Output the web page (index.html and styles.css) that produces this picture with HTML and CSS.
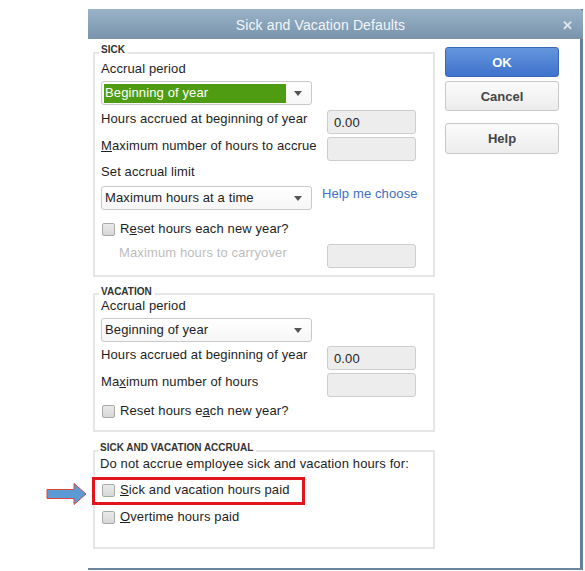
FILE: index.html
```html
<!DOCTYPE html>
<html lang="en">
<head>
    <meta charset="UTF-8" />
    <meta name="viewport" content="width=device-width, initial-scale=1.0"/>
    <title>Sick and Vacation Defaults</title>
    <link rel="stylesheet" href="styles.css">
</head>
<body>
    <div class="screen">
        <div class="dialog">
            <div class="titlebar">
                <span class="title">Sick and Vacation Defaults</span>
                <span class="close">&#x2715;</span>
            </div>

            <div class="dialog-body">
                <div class="groups">
                    <section class="group group-sick">
                        <div class="group-title">SICK</div>
                        <div class="label first">Accrual period</div>
                        <div class="select select-active">
                            <span class="select-value">Beginning of year</span>
                            <span class="caret"></span>
                        </div>
                        <div class="row row-first">
                            <div class="row-label">Hours accrued at beginning of year</div>
                            <div class="field">0.00</div>
                        </div>
                        <div class="row">
                            <div class="row-label"><u>M</u>aximum number of hours to accrue</div>
                            <div class="field"></div>
                        </div>
                        <div class="label limit">Set accrual limit</div>
                        <div class="select-row">
                            <div class="select">
                                <span class="select-value">Maximum hours at a time</span>
                                <span class="caret"></span>
                            </div>
                            <a href="#" class="help-link">Help me choose</a>
                        </div>
                        <label class="check check-reset">
                            <span class="box"></span>R<u>e</u>set hours each new year?
                        </label>
                        <div class="row row-carry">
                            <div class="row-label disabled">Maximum hours to carryover</div>
                            <div class="field"></div>
                        </div>
                    </section>

                    <section class="group group-vacation">
                        <div class="group-title">VACATION</div>
                        <div class="label">Accrual period</div>
                        <div class="select">
                            <span class="select-value">Beginning of year</span>
                            <span class="caret"></span>
                        </div>
                        <div class="row row-first">
                            <div class="row-label">Hours accrued at beginning of year</div>
                            <div class="field">0.00</div>
                        </div>
                        <div class="row">
                            <div class="row-label">Ma<u>x</u>imum number of hours</div>
                            <div class="field"></div>
                        </div>
                        <label class="check check-vac">
                            <span class="box"></span>Reset hours e<u>a</u>ch new year?
                        </label>
                    </section>

                    <section class="group group-accrual">
                        <div class="group-title">SICK AND VACATION ACCRUAL</div>
                        <div class="label intro">Do not accrue employee sick and vacation hours for:</div>
                        <label class="check check-paid">
                            <span class="box"></span><u>S</u>ick and vacation hours paid
                        </label>
                        <label class="check check-overtime">
                            <span class="box"></span><u>O</u>vertime hours paid
                        </label>
                        <div class="highlight"></div>
                    </section>
                </div>

                <div class="buttons">
                    <button class="btn btn-ok">OK</button>
                    <button class="btn btn-cancel">Cancel</button>
                    <button class="btn btn-help">Help</button>
                </div>
            </div>
        </div>

        <svg class="pointer" width="42" height="24" viewBox="0 0 42 24">
            <path d="M1 7.5 H28 V1.5 L40 12 L28 22.5 V16.5 H1 Z" fill="#5b9bd5" stroke="#e0443e" stroke-width="1"/>
        </svg>
    </div>
</body>
</html>
```

FILE: styles.css
```css
* {
    margin: 0;
    padding: 0;
    box-sizing: border-box;
}

body {
    font-family: 'Liberation Sans', Arial, sans-serif;
    font-size: 13px;
    letter-spacing: 0.12px;
    color: #1e1e1e;
    background: #ffffff;
}

.screen {
    position: relative;
    width: 585px;
    height: 571px;
    overflow: hidden;
}

.dialog {
    margin: 9px 0 0 88px;
    width: 495px;
    height: 561px;
    background: #ffffff;
    border-right: 3px solid #647f98;
    border-bottom: 2px solid #6b86a0;
}

.titlebar {
    display: flex;
    align-items: center;
    height: 30px;
    margin-right: -3px;
    background: linear-gradient(to bottom, #9ab3c8, #7893ab);
    border-top-right-radius: 4px;
}

.title {
    flex: 1;
    padding-top: 2px;
    text-align: center;
    font-size: 14px;
    color: #f3f6f9;
}

.close {
    width: 30px;
    padding-top: 2px;
    text-align: center;
    font-size: 13px;
    font-weight: bold;
    color: #dfe5ea;
}

.dialog-body {
    display: flex;
    gap: 10px;
    padding: 13px 0 0 5px;
}

.groups {
    width: 342px;
}

.group {
    position: relative;
    border: 2px solid #e6e6e6;
    padding: 0 6px;
}

.group-title {
    width: fit-content;
    height: 12px;
    margin: -10px 0 0 -2px;
    padding: 0 3px 0 2px;
    background: #ffffff;
    font-size: 10px;
    font-weight: bold;
    line-height: 12px;
    letter-spacing: 0;
    color: #333333;
}

.label {
    line-height: 16px;
}

.group-sick .label.first {
    margin-top: 5px;
}

.select {
    display: flex;
    align-items: center;
    width: 211px;
    height: 24px;
    margin-top: 4px;
    padding: 2px;
    border: 1px solid #c9c9c9;
    border-radius: 3px;
    background: linear-gradient(to bottom, #ffffff, #f6f6f6);
}

.select-value {
    flex: 1;
    padding-left: 1px;
    line-height: 18px;
}

.select-active .select-value {
    height: 19px;
    background: #4f9c12;
    color: #ffffff;
}

.caret {
    width: 0;
    height: 0;
    margin: 0 7px 0 8px;
    border-left: 4px solid transparent;
    border-right: 4px solid transparent;
    border-top: 5px solid #555555;
}

.row {
    display: flex;
    align-items: flex-start;
    margin-top: 3px;
}

.row-first {
    margin-top: 5px;
}

.row-label {
    width: 226px;
    padding-top: 1px;
    line-height: 16px;
}

.row-label.disabled {
    padding-left: 18px;
    color: #bdbdbd;
}

.field {
    width: 89px;
    height: 24px;
    padding: 4px 6px;
    border: 1px solid #cdcdcd;
    border-radius: 3px;
    background: #ededed;
    line-height: 15px;
}

.group-sick .label.limit {
    margin-top: 3px;
}

.select-row {
    display: flex;
    align-items: flex-start;
    gap: 10px;
    margin-top: 6px;
}

.select-row .select {
    margin-top: 0;
}

.help-link {
    line-height: 16px;
    color: #3d6fc6;
    text-decoration: none;
}

.check {
    display: flex;
    align-items: center;
    line-height: 16px;
}

.box {
    width: 13px;
    height: 13px;
    margin: 0 5px 0 1px;
    border: 1px solid #a9a9a9;
    border-radius: 2px;
    background: linear-gradient(to bottom, #e9e9e9, #d7d7d7);
}

.check-reset {
    margin-top: 11px;
}

.row-carry {
    margin-top: 7px;
    margin-bottom: 7px;
}

.group-vacation {
    margin-top: 16px;
    padding-bottom: 11px;
}

.group-vacation .group-title {
    margin-top: -9px;
}

.group-vacation .label {
    margin-top: 0;
}

.group-vacation .row-first {
    margin-top: 4px;
}

.check-vac {
    margin-top: 6px;
}

.group-accrual {
    margin-top: 18px;
    padding-left: 5px;
    padding-bottom: 22px;
}

.label.intro {
    margin-top: 2px;
}

.check-paid {
    margin-top: 10px;
    padding-left: 1px;
}

.check-overtime {
    margin-top: 11px;
    padding-left: 1px;
}

.highlight {
    position: absolute;
    left: -3px;
    top: 25px;
    width: 213px;
    height: 28px;
    border: 3px solid #e3141c;
}

.buttons {
    display: flex;
    flex-direction: column;
    width: 114px;
}

.btn {
    height: 30px;
    font-family: 'Liberation Sans', Arial, sans-serif;
    font-size: 13px;
    font-weight: bold;
    color: #444444;
    border: 1px solid #c8c8c8;
    border-radius: 3px;
    background: linear-gradient(to bottom, #fbfbfb, #ececec);
}

.btn-ok {
    margin-top: -5px;
    color: #ffffff;
    border-color: #3a66b5;
    background: linear-gradient(to bottom, #6496dd, #3e72cc);
}

.btn-cancel {
    margin-top: 4px;
}

.btn-help {
    margin-top: 12px;
    height: 31px;
}

.pointer {
    position: absolute;
    left: 46px;
    top: 482px;
}
```
